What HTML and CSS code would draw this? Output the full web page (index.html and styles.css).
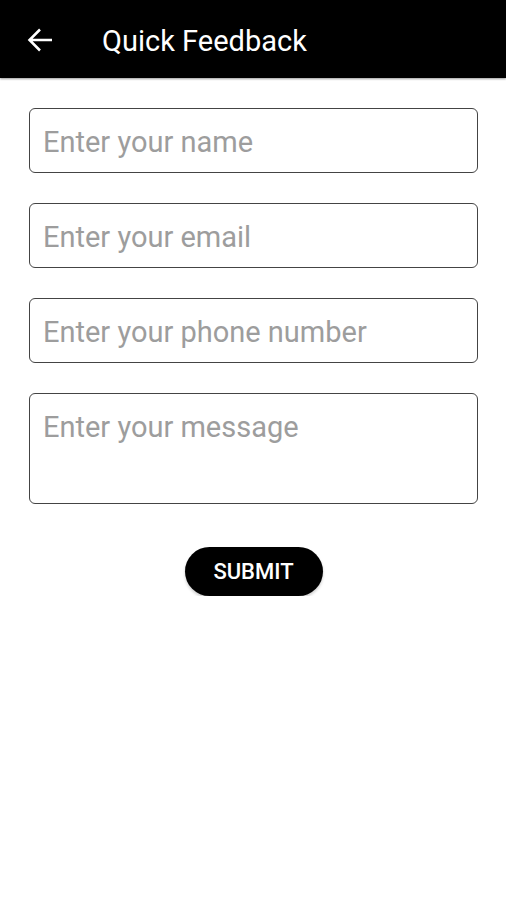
FILE: index.html
```html
<!DOCTYPE html>
<html lang="en">
<head>
    <meta charset="UTF-8">
    <meta name="viewport" content="width=device-width, initial-scale=1.0">
    <title>Quick Feedback</title>
    <link rel="stylesheet" href="styles.css">
</head>
<body>
    <header class="app-bar">
        <button class="back-btn" aria-label="Back">
            <svg width="36" height="36" viewBox="0 0 24 24">
                <path d="M20 12H5M12 5l-7 7 7 7" fill="none" stroke="#fff" stroke-width="1.7"/>
            </svg>
        </button>
        <h1>Quick Feedback</h1>
    </header>

    <form class="feedback-form">
        <input type="text" class="field" placeholder="Enter your name">
        <input type="email" class="field" placeholder="Enter your email">
        <input type="tel" class="field" placeholder="Enter your phone number">
        <textarea class="field message" placeholder="Enter your message"></textarea>
        <button type="button" class="submit-btn">SUBMIT</button>
    </form>
</body>
</html>
```

FILE: styles.css
```css
body {
    margin: 0;
    font-family: Roboto, 'Noto Sans', sans-serif;
    background: #fff;
}

.app-bar {
    display: flex;
    align-items: center;
    height: 78px;
    background: #000;
    color: #fff;
    box-shadow: 0 1px 2px rgba(0,0,0,0.4);
    padding-left: 22px;
}

.back-btn {
    background: none;
    border: none;
    padding: 0;
    width: 36px;
    height: 36px;
    display: flex;
    align-items: center;
    justify-content: center;
    margin-top: 2px;
    cursor: pointer;
}

.app-bar h1 {
    margin: 4px 0 0 44px;
    font-size: 29px;
    font-weight: 400;
}

.feedback-form {
    display: flex;
    flex-direction: column;
    gap: 30px;
    padding: 30px 28px 0 29px;
}

.field {
    box-sizing: border-box;
    height: 65px;
    width: 100%;
    padding: 3px 13px 0;
    border: 1px solid #444;
    border-radius: 6px;
    font-family: Roboto, sans-serif;
    font-size: 29px;
    color: #333;
    outline: none;
}

.field::placeholder {
    color: #9d9d9d;
}

.field.message {
    height: 111px;
    padding-top: 16px;
    resize: none;
}

.submit-btn {
    align-self: center;
    margin-top: 13px;
    width: 138px;
    height: 49px;
    border: none;
    border-radius: 25px;
    background: #000;
    color: #fff;
    font-family: Roboto, sans-serif;
    font-size: 22px;
    font-weight: 500;
    box-shadow: 0 2px 3px rgba(0,0,0,0.2);
    cursor: pointer;
}
```
